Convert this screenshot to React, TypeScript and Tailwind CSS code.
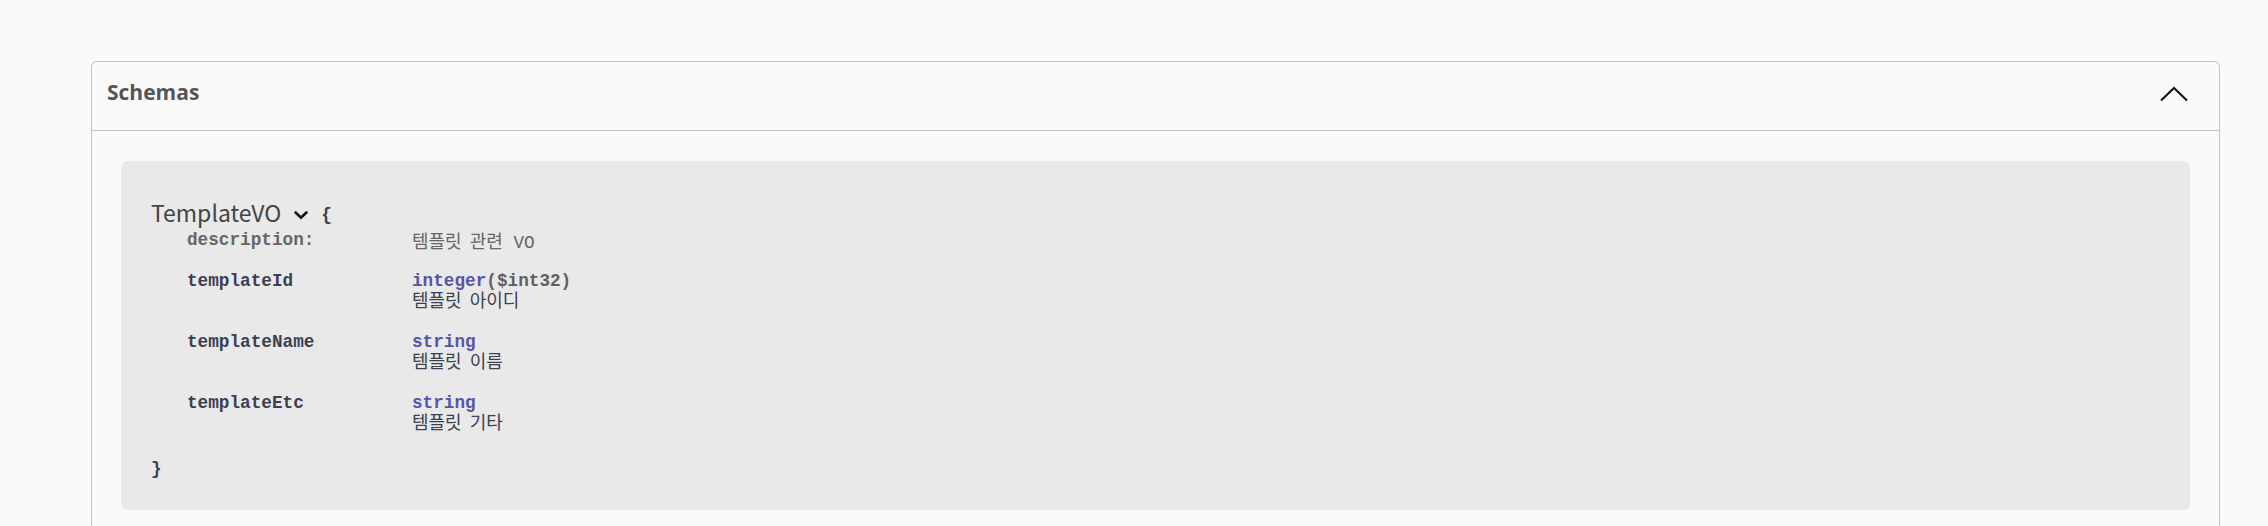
import type { ReactNode } from 'react';

type Prop = { name: string; type: string; format?: string; desc: string };

const props: Prop[] = [
  { name: 'templateId', type: 'integer', format: '($int32)', desc: '템플릿 아이디' },
  { name: 'templateName', type: 'string', desc: '템플릿 이름' },
  { name: 'templateEtc', type: 'string', desc: '템플릿 기타' },
];

const mono = "font-['Liberation_Mono','Noto_Sans_CJK_KR',monospace]";

function KeyCell({ children, muted }: { children: ReactNode; muted?: boolean }) {
  return (
    <div
      className={`w-[225px] shrink-0 ${mono} text-[17.7px] leading-[20px] font-bold ${
        muted ? 'text-[#666666]' : 'text-[#3b4151]'
      }`}
    >
      {children}
    </div>
  );
}

export default function App() {
  return (
    <div className="min-h-[526px] bg-[#fafafa] pt-[61px] pl-[91px] pr-[48px]">
      <section className="rounded-t-[6px] border border-b-0 border-[#c1c3c7] min-h-[500px]">
        <div className="flex h-[69px] items-center justify-between border-b border-[#c1c3c7] pl-[15px] pr-[31px]">
          <h4 className="font-['Open_Sans',sans-serif] text-[21px] font-bold leading-[30px] text-[#555555] -mt-[8px]">
            Schemas
          </h4>
          <svg width="28" height="16" viewBox="0 0 28 16" fill="none" className="-mt-[4px]">
            <polyline points="1,14.5 14,2 27,14.5" stroke="#111" strokeWidth="2" />
          </svg>
        </div>

        <div className="mx-[29px] mt-[30px] rounded-[6px] bg-[#e9e9e9] pl-[30px] pt-[36px] pb-[31px]">
          <div className="flex h-[30px] items-center">
            <span className="font-['Noto_Sans_CJK_KR','Open_Sans',sans-serif] text-[23px] leading-[30px] text-[#444444]">
              TemplateVO
            </span>
            <svg width="16" height="10" viewBox="0 0 16 10" fill="none" className="ml-[12px] mt-[5px]">
              <polyline points="1.8,1.8 8,7.8 14.2,1.8" stroke="#111" strokeWidth="2.6" />
            </svg>
            <span className={`${mono} ml-[12px] mt-[6px] text-[17.7px] font-bold leading-[20px] text-[#3b4151]`}>
              {'{'}
            </span>
          </div>

          <div className="mt-[3px] flex flex-col gap-[25px] pl-[36px]">
            <div className="flex -mb-[7px]">
              <KeyCell muted>description:</KeyCell>
              <div className={`${mono} text-[17.7px] leading-[20px] text-[#666666]`}>
                <span className="font-['Noto_Sans_CJK_KR',sans-serif] text-[18px] [word-spacing:4px]">템플릿 관련</span>{' '}
                VO
              </div>
            </div>
            {props.map((p) => (
              <div key={p.name} className="flex">
                <KeyCell>{p.name}</KeyCell>
                <div className="flex flex-col">
                  <div className={`${mono} text-[17.7px] leading-[20px]`}>
                    <span className="font-bold text-[#55a]">{p.type}</span>
                    {p.format && <span className="font-bold text-[#606060]">{p.format}</span>}
                  </div>
                  <div className="font-['Noto_Sans_CJK_KR',sans-serif] text-[18px] leading-[16px] text-[#3b4151] [word-spacing:4px]">
                    {p.desc}
                  </div>
                </div>
              </div>
            ))}
          </div>

          <div className={`${mono} mt-[30px] text-[17.7px] font-bold leading-[20px] text-[#3b4151]`}>{'}'}</div>
        </div>
      </section>
    </div>
  );
}
